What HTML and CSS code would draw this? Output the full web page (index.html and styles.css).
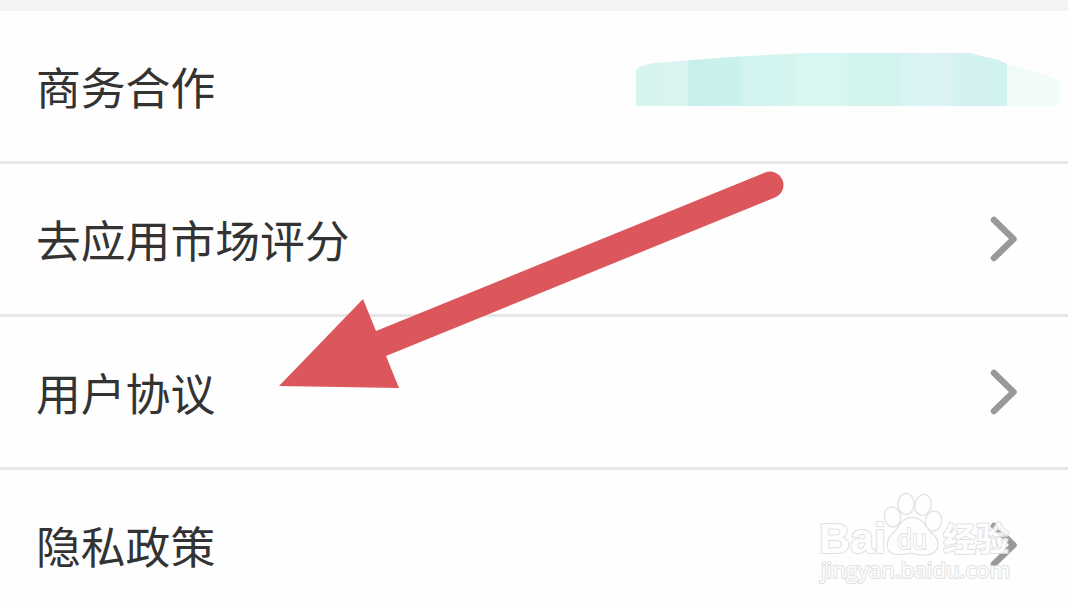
FILE: index.html
```html
<!DOCTYPE html>
<html lang="zh-CN">
<head>
  <meta charset="UTF-8" />
  <meta name="viewport" content="width=device-width, initial-scale=1.0" />
  <title>用户协议</title>
  <link rel="stylesheet" href="styles.css">
</head>
<body>
  <div class="divider"></div>

  <ul class="menu">
    <li class="menu-item">
      <span>商务合作</span>
      <svg class="smudge" viewBox="0 0 426 54">
        <defs>
          <linearGradient id="mosaic" gradientUnits="userSpaceOnUse" x1="0" y1="0" x2="371" y2="0">
            <stop offset="0" stop-color="#d7f4f0" />
            <stop offset="0.14" stop-color="#d9f3f0" />
            <stop offset="0.142" stop-color="#c7f0ec" />
            <stop offset="0.28" stop-color="#c9f2ed" />
            <stop offset="0.285" stop-color="#d1f4f1" />
            <stop offset="0.428" stop-color="#d4f4ef" />
            <stop offset="0.432" stop-color="#d8f6f2" />
            <stop offset="0.568" stop-color="#d8f6f2" />
            <stop offset="0.572" stop-color="#d2f3ee" />
            <stop offset="0.71" stop-color="#d2f3ee" />
            <stop offset="0.714" stop-color="#d9f3f3" />
            <stop offset="0.85" stop-color="#daf2f4" />
            <stop offset="0.864" stop-color="#d3f2f1" />
            <stop offset="1" stop-color="#d2f2f1" />
          </linearGradient>
        </defs>
        <path fill="#f0fbfa" d="M370 11 Q400 17 424 28 V50 L420 53 H370 Z" />
        <path fill="url(#mosaic)" d="M0 17 Q3 12 18 10 L95 4 L170 0 H334 L349 4 Q364 6 371 11 V53 H0 Z" />
      </svg>
    </li>
    <li class="menu-item">
      <span>去应用市场评分</span>
      <svg class="chevron" viewBox="0 0 30 46"><path d="M4 4 L23.500 23 L4 42" /></svg>
    </li>
    <li class="menu-item">
      <span>用户协议</span>
      <svg class="chevron" viewBox="0 0 30 46"><path d="M4 4 L23.500 23 L4 42" /></svg>
    </li>
    <li class="menu-item">
      <span>隐私政策</span>
      <svg class="chevron" viewBox="0 0 30 46"><path d="M4 4 L23.500 23 L4 42" /></svg>
    </li>
  </ul>

  <svg class="arrow" viewBox="0 0 510 224">
    <path d="M5 220 L89 133 L102 165 L491 6.500 A13.400 13.400 0 0 1 501 31.500 L112 190 L125 222 Z" />
  </svg>

  <svg class="watermark" viewBox="0 0 210 100">
    <text class="brand" x="8" y="63" textLength="67" lengthAdjust="spacingAndGlyphs">Bai</text>
    <g class="paw">
      <ellipse cx="81.500" cy="27" rx="7.500" ry="9.500" transform="rotate(-12 81 27)" />
      <ellipse cx="95" cy="14" rx="7.500" ry="10" />
      <ellipse cx="112" cy="15" rx="7.500" ry="10" transform="rotate(12 112 15)" />
      <ellipse cx="122.500" cy="31" rx="7.500" ry="9.500" transform="rotate(12 122 31)" />
      <path d="M101 28 C91 28 89 37 84 42 C74 50 74 64 87 64 C94 64 97 62 103 63 C109 65 114 65 118 64 C128 62 129 51 121 44 C115 39 112 28 101 28 Z" />
    </g>
    <text class="du" x="86" y="59" textLength="30" lengthAdjust="spacingAndGlyphs">du</text>
    <text class="exp" x="132" y="61" textLength="66" lengthAdjust="spacingAndGlyphs">经验</text>
    <text class="url" x="10" y="88" textLength="189" lengthAdjust="spacingAndGlyphs">jingyan.baidu.com</text>
  </svg>
</body>
</html>
```

FILE: styles.css
```css
:root {
  --text-color: #333;
  --line-color: #e6e6e6;
  --chevron-color: #999;
  --arrow-color: #dc575c;
  --mark-line: #dcdcdc;
}

* { box-sizing: border-box; }

body {
  margin: 0;
  height: 608px;
  position: relative;
  overflow: hidden;
  background: #fefefe;
  color: var(--text-color);
  font-family: 'Noto Sans CJK SC', sans-serif;
}

.divider {
  height: 11px;
  background: #f2f4f4;
}

.menu {
  list-style: none;
  margin: 0;
  padding: 0;
}

.menu-item {
  display: flex;
  justify-content: space-between;
  align-items: center;
  height: 153px;
  padding: 0 48px 0 36px;
  border-bottom: 3px solid var(--line-color);
  font-size: 44.8px;
  line-height: 60px;
}

.smudge {
  width: 426px;
  height: 54px;
  margin: -13px -42px 0 0;
}

.chevron {
  width: 30px;
  height: 46px;
  fill: none;
  stroke: var(--chevron-color);
  stroke-width: 6.5;
  stroke-linecap: round;
  stroke-linejoin: round;
}

/* pointer drawn over the list */
.arrow {
  position: absolute;
  left: 274px;
  top: 166px;
  width: 510px;
  height: 224px;
  fill: var(--arrow-color);
}

.watermark {
  position: absolute;
  left: 811px;
  top: 490px;
  width: 210px;
  height: 100px;
  fill: #fefefe;
  stroke: var(--mark-line);
  stroke-width: 2;
  stroke-linejoin: round;
  paint-order: stroke;
  opacity: 0.85;
}

.paw {
  stroke-width: 2.4;
}

.brand {
  font: bold 43px 'Liberation Sans', sans-serif;
}

.du {
  font: 28px 'Open Sans', sans-serif;
}

.exp {
  font: bold 33px 'Noto Sans CJK SC', sans-serif;
}

.url {
  font: 22px 'Open Sans', sans-serif;
}
```
